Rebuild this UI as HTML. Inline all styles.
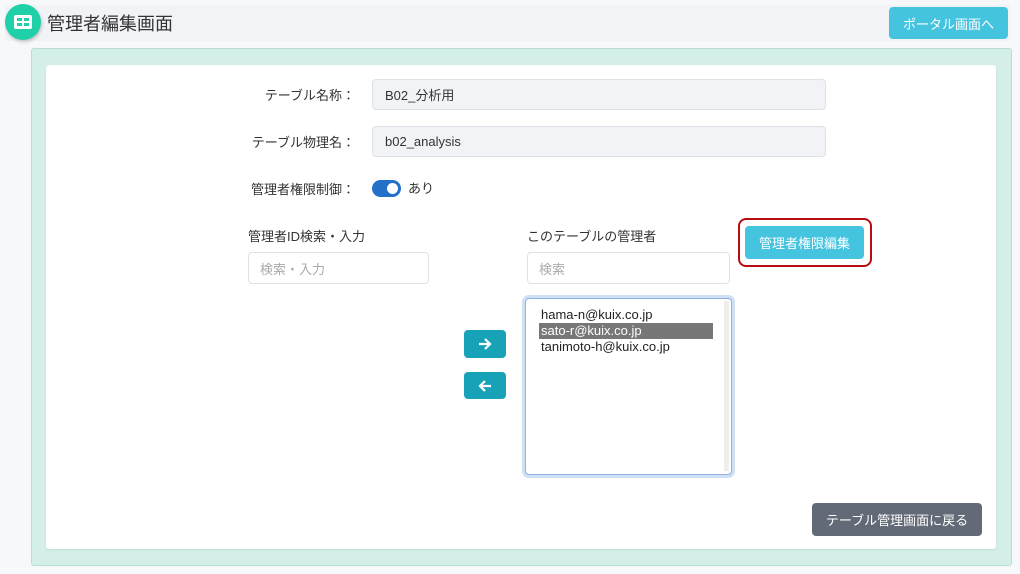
<!DOCTYPE html>
<html><head><meta charset="utf-8"><style>
*{box-sizing:border-box;margin:0;padding:0}
body{width:1020px;height:574px;background:#f7f8fa;font-family:"Liberation Sans","Noto Sans CJK JP",sans-serif;color:#333;position:relative;overflow:hidden;font-size:13px}
.a{position:absolute}
.hdr{left:5px;top:5px;width:1005px;height:36px;background:#f1f3f7}
.ic{left:5px;top:4px;width:36px;height:36px;border-radius:50%;background:#20d0a8;box-shadow:1px 2px 3px rgba(0,0,0,.2)}
.ttl{left:47px;top:10px;font-size:18px;color:#333}
.btn{display:flex;align-items:center;justify-content:center;color:#fff;border-radius:4px}
.green{left:31px;top:48px;width:981px;height:518px;background:#d3efe8;border:1px solid #b9ddd5;border-radius:3px}
.card{left:46px;top:65px;width:950px;height:484px;background:#fff;border-radius:3px;box-shadow:0 1px 2px rgba(0,0,0,.08)}
.lbl{text-align:right;width:200px;left:155px;font-size:13px;color:#333}
.inp{background:#f1f3f7;border:1px solid #dee2e6;border-radius:4px;padding-left:12px;display:flex;align-items:center;font-size:13px;color:#333}
.sin{background:#fff;border:1px solid #dee2e6;border-radius:4px;padding-left:11px;display:flex;align-items:center;font-size:13px;color:#aaa}
.it{left:541px;font-size:13px;color:#222;line-height:16px}
</style></head><body>
<div class="a hdr"></div>
<div class="a ic"><svg width="36" height="36"><rect x="9" y="11" width="18" height="14" rx="2" fill="#fff"/><rect x="12" y="14" width="5" height="3" fill="#20d0a8"/><rect x="19" y="14" width="5" height="3" fill="#20d0a8"/><rect x="12" y="19" width="5" height="3" fill="#20d0a8"/><rect x="19" y="19" width="5" height="3" fill="#20d0a8"/></svg></div>
<div class="a ttl">管理者編集画面</div>
<div class="a btn" style="left:889px;top:7px;width:119px;height:32px;background:#45c4e0;font-size:13px">ポータル画面へ</div>
<div class="a green"></div>
<div class="a card"></div>
<div class="a lbl" style="top:85px">テーブル名称：</div>
<div class="a inp" style="left:372px;top:79px;width:454px;height:31px">B02_分析用</div>
<div class="a lbl" style="top:132px">テーブル物理名：</div>
<div class="a inp" style="left:372px;top:126px;width:454px;height:31px">b02_analysis</div>
<div class="a lbl" style="top:179px">管理者権限制御：</div>
<div class="a" style="left:372px;top:180px;width:29px;height:17px;border-radius:9px;background:#2470c9"><div style="position:absolute;right:3px;top:3px;width:11px;height:11px;border-radius:50%;background:#fff"></div></div>
<div class="a" style="left:408px;top:178px">あり</div>
<div class="a" style="left:248px;top:226px">管理者ID検索・入力</div>
<div class="a sin" style="left:248px;top:252px;width:181px;height:32px">検索・入力</div>
<div class="a" style="left:527px;top:226px">このテーブルの管理者</div>
<div class="a sin" style="left:527px;top:252px;width:203px;height:32px">検索</div>
<div class="a" style="left:738px;top:218px;width:134px;height:49px;border:2px solid #b70d10;border-radius:8px"></div>
<div class="a btn" style="left:745px;top:226px;width:119px;height:33px;background:#45c4e0;font-size:13px">管理者権限編集</div>
<div class="a btn" style="left:464px;top:330px;width:42px;height:28px;background:#17a2b8"><svg width="14" height="12"><path d="M1 6H12M7 1L12 6L7 11" stroke="#fff" stroke-width="2.2" fill="none"/></svg></div>
<div class="a btn" style="left:464px;top:372px;width:42px;height:27px;background:#17a2b8"><svg width="14" height="12"><path d="M13 6H2M7 1L2 6L7 11" stroke="#fff" stroke-width="2.2" fill="none"/></svg></div>
<div class="a" style="left:525px;top:298px;width:207px;height:177px;border:1px solid #8fb2e2;border-radius:4px;box-shadow:0 0 0 3px #cfe0f5;background:#fff"></div>
<div class="a" style="left:724px;top:301px;width:5px;height:170px;background:#eee"></div>
<div class="a" style="left:539px;top:323px;width:174px;height:16px;background:#777"></div>
<div class="a it" style="top:307px">hama-n@kuix.co.jp</div>
<div class="a it" style="top:323px;color:#fff">sato-r@kuix.co.jp</div>
<div class="a it" style="top:339px">tanimoto-h@kuix.co.jp</div>
<div class="a btn" style="left:812px;top:503px;width:170px;height:33px;background:#636a77;font-size:13px">テーブル管理画面に戻る</div>
</body></html>
